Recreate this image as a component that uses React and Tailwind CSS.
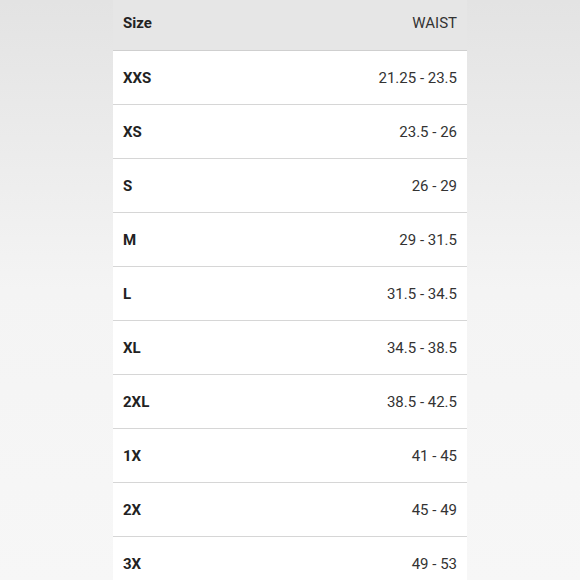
import React from 'react';

const rows = [
  ['XXS', '21.25 - 23.5'],
  ['XS', '23.5 - 26'],
  ['S', '26 - 29'],
  ['M', '29 - 31.5'],
  ['L', '31.5 - 34.5'],
  ['XL', '34.5 - 38.5'],
  ['2XL', '38.5 - 42.5'],
  ['1X', '41 - 45'],
  ['2X', '45 - 49'],
  ['3X', '49 - 53'],
];

export default function App() {
  return (
    <div
      className="w-[580px] h-[580px] overflow-hidden flex justify-center bg-gradient-to-b from-[#e3e3e3] via-[#f4f4f4] to-[#f7f7f7]"
      style={{ fontFamily: 'Roboto, "Liberation Sans", sans-serif' }}
    >
      <div className="w-[354px] bg-white">
        {/* Cabecera */}
        <div className="h-[51px] flex items-center justify-between px-[10px] pb-[3px] bg-[#e6e6e6] border-b border-[#cfcfcf]">
          <span className="text-[15px] font-bold text-[#222]">Size</span>
          <span className="text-[15px] text-[#333]">WAIST</span>
        </div>
        {rows.map(([size, waist]) => (
          <div
            key={size}
            className="h-[54px] flex items-center justify-between px-[10px] pt-[2px] border-b border-[#d6d6d6]"
          >
            <span className="text-[15px] font-bold text-[#222]">{size}</span>
            <span className="text-[15px] text-[#333]">{waist}</span>
          </div>
        ))}
      </div>
    </div>
  );
}
